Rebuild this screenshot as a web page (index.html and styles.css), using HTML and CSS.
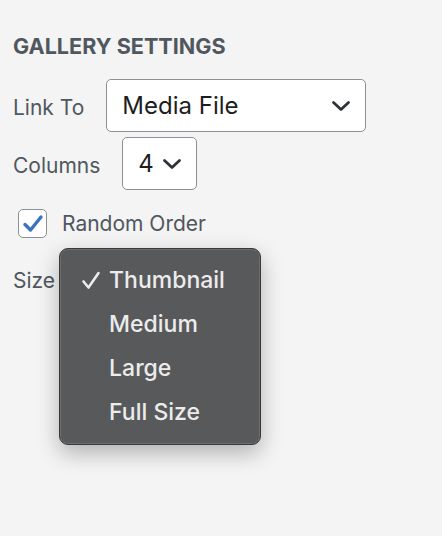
FILE: index.html
```html
<!DOCTYPE html>
<html>
<head>
<meta charset="utf-8">
<link rel="stylesheet" href="styles.css">
</head>
<body>
<div class="panel">
  <h2 class="title">GALLERY SETTINGS</h2>
  <div class="row row-link">
    <span class="label">Link To</span>
    <div class="select select-wide">
      <span class="value">Media File</span>
      <svg class="chev" width="20" height="12" viewBox="0 0 20 12"><path d="M2.5 2.5 L10 9.5 L17.5 2.5" fill="none" stroke="#2c3338" stroke-width="2.8" stroke-linecap="round" stroke-linejoin="round"/></svg>
    </div>
  </div>
  <div class="row row-cols">
    <span class="label">Columns</span>
    <div class="select select-narrow">
      <span class="value">4</span>
      <svg class="chev" width="20" height="12" viewBox="0 0 20 12"><path d="M2.5 2.5 L10 9.5 L17.5 2.5" fill="none" stroke="#2c3338" stroke-width="2.8" stroke-linecap="round" stroke-linejoin="round"/></svg>
    </div>
  </div>
  <div class="row row-check">
    <span class="checkbox">
      <svg width="22" height="20" viewBox="0 0 22 20"><path d="M3 10.5 L8.5 16 L19 3" fill="none" stroke="#3b73c1" stroke-width="3.4" stroke-linecap="round" stroke-linejoin="round"/></svg>
    </span>
    <span class="check-label">Random Order</span>
  </div>
  <div class="row row-size">
    <span class="label">Size</span>
    <div class="menu">
      <div class="item"><svg class="tick" width="20" height="19" viewBox="0 0 20 19"><path d="M2.5 10.5 L7.5 16.5 L17.5 2" fill="none" stroke="#ececec" stroke-width="2.6" stroke-linecap="round" stroke-linejoin="round"/></svg>Thumbnail</div>
      <div class="item">Medium</div>
      <div class="item">Large</div>
      <div class="item">Full Size</div>
    </div>
  </div>
</div>
</body>
</html>
```
FILE: styles.css
```css
* { box-sizing: border-box; }
html, body { margin: 0; padding: 0; }
body {
  background: #f3f4f3;
  font-family: Inter, "Noto Sans", "Liberation Sans", sans-serif;
  color: #50575e;
  width: 442px;
  height: 536px;
  overflow: hidden;
}
.panel {
  padding: 33px 0 0 13px;
}
.title {
  margin: 0;
  font-size: 21.6px;
  font-weight: 700;
  line-height: 26px;
  color: #50575e;
}
.row {
  display: flex;
  align-items: center;
}
.label {
  font-size: 21px;
  color: #50575e;
}
.row-link { margin-top: 20px; }
.row-link .label { margin-right: 22px; padding-top: 4px; }
.select {
  display: flex;
  align-items: center;
  justify-content: space-between;
  height: 53px;
  background: #fff;
  border: 1px solid #8c8f94;
  border-radius: 5px;
  color: #1e1e1e;
}
.select .value { font-size: 24px; }
.select-wide { width: 260px; padding: 0 14px 0 15px; }
.select-narrow { width: 75px; padding: 0 14px 0 15px; }
.row-cols { margin-top: 5px; }
.row-cols .label { margin-right: 22px; padding-top: 3px; }
.row-check { margin-top: 19px; padding-left: 5px; }
.checkbox {
  width: 29px;
  height: 29px;
  border: 1px solid #8c8f94;
  border-radius: 5px;
  background: #fff;
  display: flex;
  align-items: center;
  justify-content: center;
  margin-right: 15px;
}
.check-label { font-size: 21px; color: #50575e; }
.row-size {
  margin-top: 10px;
  align-items: flex-start;
}
.row-size .label { margin-top: 20px; margin-right: 4px; }
.menu {
  width: 202px;
  height: 197px;
  background: #58595b;
  border: 1px solid #3a3a3a;
  border-radius: 9px;
  box-shadow: 0 8px 22px rgba(0,0,0,0.28), inset 0 0 0 1px rgba(255,255,255,0.12);
  padding-top: 9px;
  color: #ececec;
}
.item {
  position: relative;
  height: 44px;
  line-height: 44px;
  padding-left: 49px;
  font-size: 23px;
  font-weight: 500;
}
.tick {
  position: absolute;
  left: 21px;
  top: 13px;
}
```
